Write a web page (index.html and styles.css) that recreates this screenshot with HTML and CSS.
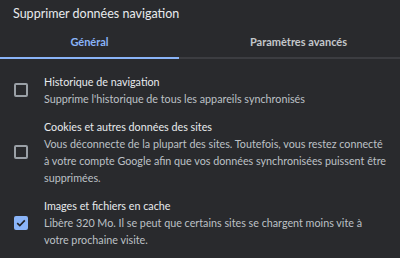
FILE: index.html
```html
<!DOCTYPE html>
<html lang="fr">
<head>
<meta charset="utf-8">
<link rel="stylesheet" href="styles.css">
</head>
<body>
<div class="dialog">
  <div class="title">Supprimer données navigation</div>
  <div class="tabs">
    <div class="tab tab-active">Général</div>
    <div class="tab tab-right">Paramètres avancés</div>
  </div>
  <div class="list">
    <div class="row">
      <span class="box"></span>
      <div class="text">
        <div class="label">Historique de navigation</div>
        <div class="desc">Supprime l'historique de tous les appareils synchronisés</div>
      </div>
    </div>
    <div class="row">
      <span class="box"></span>
      <div class="text">
        <div class="label">Cookies et autres données des sites</div>
        <div class="desc">Vous déconnecte de la plupart des sites. Toutefois, vous restez connecté à&nbsp;votre compte Google afin que vos données synchronisées puissent être supprimées.</div>
      </div>
    </div>
    <div class="row">
      <span class="box box-checked"><svg width="10" height="8" viewBox="0 0 10 8"><path d="M1.2 4.2 L3.8 6.6 L8.8 1.4" fill="none" stroke="#202124" stroke-width="1.6"/></svg></span>
      <div class="text">
        <div class="label">Images et fichiers en cache</div>
        <div class="desc desc-narrow">Libère 320 Mo. Il se peut que certains sites se chargent moins vite à votre prochaine visite.</div>
      </div>
    </div>
  </div>
</div>
</body>
</html>
```
FILE: styles.css
```css
html, body {
  margin: 0;
  padding: 0;
  background: #292a2d;
}
body {
  font-family: Lato, "Noto Sans", sans-serif;
  color: #e8eaed;
  width: 400px;
  height: 258px;
  overflow: hidden;
}
.title {
  font-size: 12.5px;
  line-height: 20px;
  padding: 4px 0 0 13px;
  box-sizing: border-box;
  height: 28px;
}
.tabs {
  display: flex;
  height: 31px;
  border-bottom: 2px solid #3c3d41;
  box-sizing: border-box;
}
.tab {
  font-size: 11px;
  font-weight: 700;
  line-height: 16px;
  padding-top: 6px;
  text-align: center;
  color: #c4c7ca;
  box-sizing: border-box;
}
.tab-active {
  width: 179px;
  color: #8ab4f8;
  border-bottom: 2px solid #8ab4f8;
  margin-bottom: -2px;
}
.tab-right {
  flex: 1;
  padding-left: 18px;
}
.list {
  display: flex;
  flex-direction: column;
  gap: 11px;
  padding-top: 14px;
}
.row {
  display: flex;
  align-items: center;
  gap: 16px;
  padding-left: 14px;
}
.box {
  width: 14px;
  height: 14px;
  box-sizing: border-box;
  border: 2px solid #9aa0a6;
  border-radius: 2px;
  flex: none;
  display: flex;
  align-items: center;
  justify-content: center;
}
.box-checked {
  background: #8ab4f8;
  border-color: #8ab4f8;
}
.text {
  font-size: 10.75px;
  line-height: 17px;
  width: 355px;
}
.label {
  color: #e8eaed;
}
.desc {
  color: #bdc1c6;
}
.desc-narrow {
  max-width: 338px;
}
```
